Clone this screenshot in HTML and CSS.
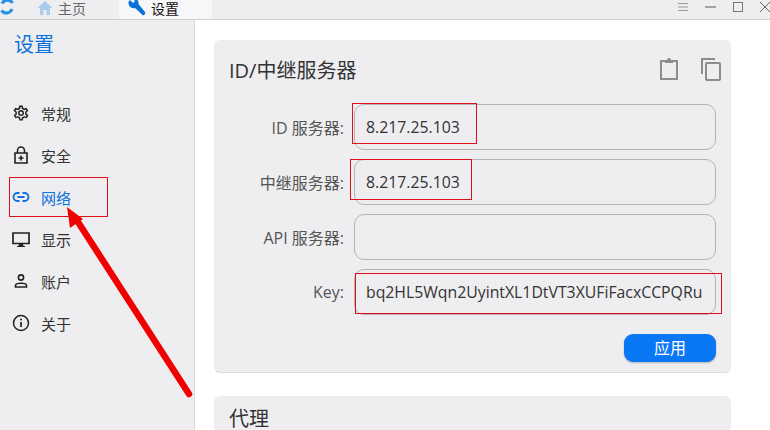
FILE: index.html
```html
<!DOCTYPE html>
<html lang="zh-CN">
<head>
  <meta charset="UTF-8" />
  <title>设置</title>
  <link rel="stylesheet" href="styles.css">
</head>
<body>
  <div class="topbar">
    <div class="tabs">
      <svg class="logo" width="15" height="20" viewBox="0 0 15 20"><path d="M1.500 10.500 A6 6 0 0 0 12 9 M12.500 3 A6 6 0 0 0 2 3.500" fill="none" stroke="#2391e6" stroke-width="3"/></svg>
      <div class="tab">
        <svg width="16" height="14" viewBox="0 0 16 14"><path d="M8 0 L0.5 7 H3 V14 H6.5 V9 H9.5 V14 H13 V7 H15.5 Z" fill="#a9cdec"/></svg>
        <span>主页</span>
      </div>
      <div class="tab active">
        <svg width="18" height="18" viewBox="0 0 18 18"><path d="M2 1 L5 4 L7 2 L5 0 C8 -1 11 1 10.5 5 L17 13 C18 15 16 17 14.500 16 L7 9 C3 10 0 7 0.500 3 Z" fill="#0b72d9"/></svg>
        <span>设置</span>
      </div>
    </div>
    <div class="win-controls">
      <svg width="10" height="8" viewBox="0 0 10 8"><path d="M0 .5 H10 M0 4 H10 M0 7.5 H10" stroke="#999" fill="none"/></svg>
      <svg width="11" height="2" viewBox="0 0 11 2"><path d="M0 1 H11" stroke="#555" fill="none"/></svg>
      <svg width="10" height="10" viewBox="0 0 10 10"><rect x=".5" y=".5" width="9" height="9" stroke="#777" fill="none"/></svg>
      <svg width="10" height="10" viewBox="0 0 10 10"><path d="M0 0 L10 10 M10 0 L0 10" stroke="#666" fill="none"/></svg>
    </div>
  </div>

  <div class="layout">
    <aside class="sidebar">
      <h1 class="side-title">设置</h1>
      <nav class="side-nav">
        <a class="side-item">
          <svg width="18" height="18" viewBox="0 0 24 24"><path fill="#222" d="M19.4 13c0-.3.1-.6.1-1s0-.7-.1-1l2.100-1.600c.2-.2.2-.4.1-.6l-2-3.500c-.1-.2-.4-.3-.6-.2l-2.500 1c-.5-.4-1.100-.7-1.700-1l-.4-2.600c0-.3-.2-.4-.5-.4h-4c-.3 0-.5.1-.5.4l-.4 2.600c-.6.3-1.200.6-1.700 1l-2.500-1c-.2-.1-.5 0-.6.2l-2 3.500c-.1.2-.1.4.1.6L4.600 11c0 .3-.1.6-.1 1s0 .7.1 1l-2.100 1.600c-.2.2-.2.4-.1.6l2 3.500c.1.2.4.3.6.2l2.500-1c.5.4 1.100.7 1.700 1l.4 2.600c0 .3.2.4.5.4h4c.3 0 .5-.1.5-.4l.4-2.600c.6-.3 1.200-.6 1.700-1l2.500 1c.2.1.5 0 .6-.2l2-3.500c.1-.2.1-.4-.1-.6zM17.500 11.500c.1.4.1.700 0 1.400l-.1 1 2 1.500-.9 1.500-2.300-.9-.8.6c-.5.4-1 .7-1.400.8l-.9.4-.4 2.500h-1.400l-.4-2.500-.9-.4c-.5-.2-1-.5-1.400-.8l-.8-.6-2.300.9-.9-1.500 2-1.500-.1-1c-.1-.6-.1-1 0-1.500l.1-1-2-1.500.9-1.500 2.300.9.8-.6c.5-.4 1-.7 1.400-.8l.9-.4.4-2.500h1.400l.4 2.500.9.4c.5.2 1 .5 1.400.8l.8.6 2.300-.9.9 1.500-2 1.500zM12 8a4 4 0 1 0 0 8 4 4 0 0 0 0-8zm0 6a2 2 0 1 1 0-4 2 2 0 0 1 0 4z"/></svg>
          <span>常规</span>
        </a>
        <a class="side-item">
          <svg width="18" height="18" viewBox="0 0 18 18"><path d="M5.500 7 V4.500 a3.500 3.500 0 0 1 7 0 V7 M3 7 H15 V17 H3 Z M9 9.500 V14.500 M6.500 12 H11.500" fill="none" stroke="#222" stroke-width="1.600"/></svg>
          <span>安全</span>
        </a>
        <a class="side-item current">
          <svg width="18" height="18" viewBox="0 0 18 18"><path d="M7.500 5 H5.500 a4 4 0 0 0 0 8 H7.500 M10.500 5 H12.500 a4 4 0 0 1 0 8 H10.500 M5.500 9 H12.500" fill="none" stroke="#0b72e0" stroke-width="1.800"/></svg>
          <span>网络</span>
        </a>
        <a class="side-item">
          <svg width="18" height="18" viewBox="0 0 18 18"><path d="M1 3 H17 V13.500 H1 Z" fill="none" stroke="#222" stroke-width="1.700"/><path d="M7 14 H11 L11.500 16 H13 V17 H5 V16 H6.500 Z" fill="#222"/></svg>
          <span>显示</span>
        </a>
        <a class="side-item">
          <svg width="18" height="18" viewBox="0 0 18 18"><circle cx="9" cy="5.500" r="2.600" fill="none" stroke="#222" stroke-width="1.600"/><path d="M3.500 15 V13.500 C3.500 10.500 14.500 10.500 14.500 13.500 V15 Z" fill="none" stroke="#222" stroke-width="1.600"/></svg>
          <span>账户</span>
        </a>
        <a class="side-item">
          <svg width="18" height="18" viewBox="0 0 18 18"><circle cx="9" cy="9" r="7.500" fill="none" stroke="#222" stroke-width="1.500"/><path d="M9 8 V13" stroke="#222" stroke-width="1.700"/><circle cx="9" cy="5.500" r="1" fill="#222"/></svg>
          <span>关于</span>
        </a>
      </nav>
    </aside>

    <main class="content">
      <section class="card">
        <div class="card-head">
          <h2>ID/中继服务器</h2>
          <div class="card-tools">
            <svg width="20" height="24" viewBox="0 0 20 24"><path d="M6 4 H2 V22 H18 V4 H14" fill="none" stroke="#8c8c8c" stroke-width="2"/><path d="M6 6 V3 H8 A2 2 0 0 1 12 3 H14 V6 Z" fill="#8c8c8c"/></svg>
            <svg width="21" height="24" viewBox="0 0 21 24"><path d="M2 17 V2 H15" fill="none" stroke="#8c8c8c" stroke-width="2"/><rect x="6" y="6" width="14" height="17" fill="none" stroke="#8c8c8c" stroke-width="2" rx="1"/></svg>
          </div>
        </div>
        <div class="form">
          <label class="row"><span>ID 服务器:</span><input type="text" value="8.217.25.103" readonly></label>
          <label class="row"><span>中继服务器:</span><input type="text" value="8.217.25.103" readonly></label>
          <label class="row"><span>API 服务器:</span><input type="text" value="" readonly></label>
          <label class="row"><span>Key:</span><input type="text" value="bq2HL5Wqn2UyintXL1DtVT3XUFiFacxCCPQRuM8wYkE=" readonly></label>
        </div>
        <div class="actions">
          <button class="btn">应用</button>
        </div>
      </section>
      <section class="card">
        <div class="card-head small">
          <h2>代理</h2>
        </div>
      </section>
    </main>
  </div>

  <!-- red marks drawn on top of the screenshot -->
  <svg class="marks" width="770" height="430" viewBox="0 0 770 430">
    <g fill="none" stroke="#e01018" shape-rendering="crispEdges">
      <rect x="9.500" y="177.500" width="98" height="39"/>
      <rect x="352.500" y="103.500" width="124" height="40"/>
      <rect x="350.500" y="159.500" width="121" height="40"/>
      <rect x="355.500" y="273.500" width="366" height="40"/>
    </g>
    <path d="M189 394 L78 222" stroke="#f00000" stroke-width="6.500" stroke-linecap="round" fill="none"/>
    <path d="M67 207 L83 219 L70 228 Z" fill="#f00000"/>
  </svg>
</body>
</html>
```

FILE: styles.css
```css
html, body {
  height: 100%;
}

body {
  margin: 0;
  width: 770px;
  height: 430px;
  overflow: hidden;
  position: relative;
  display: flex;
  flex-direction: column;
  font-family: "Open Sans", "Noto Sans CJK SC", sans-serif;
  background-color: #ffffff;
  color: #222;
}

.topbar {
  flex: none;
  height: 20px;
  box-sizing: border-box;
  display: flex;
  justify-content: space-between;
  background-color: #eeeef0;
  border-bottom: 1px solid #cfcfd2;
  overflow: hidden;
}

.tabs {
  display: flex;
  align-items: center;
}

.logo {
  margin-right: 12px;
}

.tab {
  width: 92px;
  height: 20px;
  display: flex;
  align-items: center;
  gap: 5px;
  box-sizing: border-box;
  padding-left: 10px;
  padding-bottom: 4px;
  font-size: 14px;
  color: #666;
}

.tab.active {
  width: 93px;
  padding-left: 9px;
  gap: 5px;
  color: #111;
  background-color: #f7f7f9;
}

.win-controls {
  display: flex;
  align-items: center;
  gap: 17px;
  padding-bottom: 5px;
}

.layout {
  flex: 1;
  display: flex;
  min-height: 0;
}

.sidebar {
  flex: none;
  width: 194px;
  background-color: #eeeef0;
  border-right: 1px solid #d9d9dc;
}

.side-title {
  margin: 11px 0 0 14px;
  font-size: 20px;
  line-height: 28px;
  font-weight: 400;
  color: #0b72e0;
}

.side-nav {
  margin-top: 33px;
  display: flex;
  flex-direction: column;
}

.side-item {
  height: 42px;
  display: flex;
  align-items: center;
  gap: 11px;
  padding-left: 12px;
  font-size: 15px;
  color: #333;
}

.side-item.current {
  color: #0b72e0;
}

.content {
  flex: 1;
  padding: 20px 39px 0 19px;
  display: flex;
  flex-direction: column;
  gap: 23px;
  overflow: hidden;
}

.card {
  flex: none;
  background-color: #eeeef0;
  border-radius: 6px;
  border-bottom: 1px solid #dcdcdf;
  padding: 0 15px;
}

.card-head {
  height: 47px;
  padding-top: 17px;
  display: flex;
  align-items: flex-start;
  justify-content: space-between;
}

.card-head.small {
  height: 22px;
  padding-top: 13px;
}

.card-head h2 {
  margin: 0;
  font-size: 20px;
  line-height: 28px;
  font-weight: 400;
  color: #333;
}

.card-head.small h2 {
  line-height: 20px;
}

.card-tools {
  display: flex;
  gap: 21px;
  margin-right: -5px;
}

.form {
  display: flex;
  flex-direction: column;
  gap: 9px;
}

.row {
  display: flex;
  align-items: center;
  gap: 10px;
  font-size: 16px;
  color: #555;
}

.row span {
  width: 115px;
  text-align: right;
}

.row input {
  flex: none;
  width: 362px;
  height: 46px;
  box-sizing: border-box;
  padding: 0 13px 0 11px;
  font-family: inherit;
  font-size: 15.800px;
  color: #333;
  background: transparent;
  border: 1px solid #b4b4b6;
  border-radius: 10px;
  outline: none;
}

.actions {
  display: flex;
  justify-content: flex-end;
  padding: 19px 0 10px;
}

.btn {
  width: 92px;
  height: 28px;
  border: none;
  border-radius: 9px;
  background-color: #0a78f5;
  color: #fff;
  font-family: inherit;
  font-size: 16px;
  line-height: 20px;
  padding: 0;
  box-shadow: 0 1px 2px rgba(0, 0, 0, 0.25);
}

.marks {
  position: absolute;
  left: 0;
  top: 0;
}
```
